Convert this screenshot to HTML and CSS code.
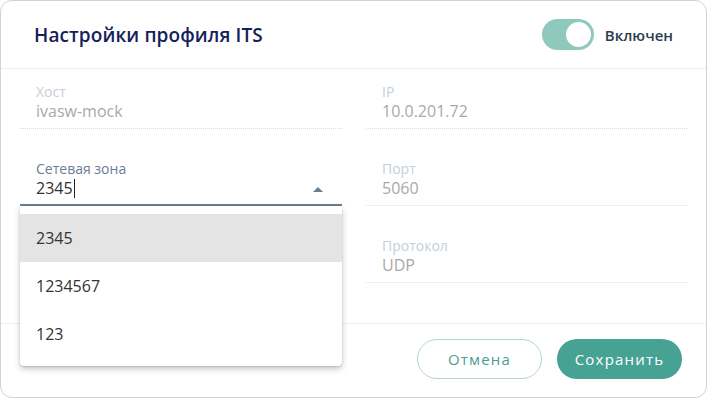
FILE: index.html
```html
<!DOCTYPE html>
<html lang="ru">
<head>
    <meta charset="UTF-8">
    <meta name="viewport" content="width=device-width, initial-scale=1.0">
    <title>Настройки профиля ITS</title>
    <link rel="stylesheet" href="styles.css">
</head>
<body>

    <div class="dialog">
        <div class="dialog-header">
            <h1>Настройки профиля ITS</h1>
            <label class="switch">
                <span class="switch-track"><span class="switch-thumb"></span></span>
                <span class="switch-text">Включен</span>
            </label>
        </div>

        <div class="dialog-body">
            <div class="field">
                <div class="field-label">Хост</div>
                <div class="field-value">ivasw-mock</div>
            </div>
            <div class="field">
                <div class="field-label">IP</div>
                <div class="field-value">10.0.201.72</div>
            </div>

            <div class="field select active">
                <div class="field-label">Сетевая зона</div>
                <div class="field-value">2345<span class="caret"></span></div>
                <span class="arrow"></span>
                <ul class="menu">
                    <li class="selected">2345</li>
                    <li>1234567</li>
                    <li>123</li>
                </ul>
            </div>
            <div class="field">
                <div class="field-label">Порт</div>
                <div class="field-value">5060</div>
            </div>

            <div></div>
            <div class="field">
                <div class="field-label">Протокол</div>
                <div class="field-value">UDP</div>
            </div>
        </div>

        <div class="dialog-footer">
            <button class="btn btn-outline">Отмена</button>
            <button class="btn btn-primary">Сохранить</button>
        </div>
    </div>

</body>
</html>
```

FILE: styles.css
```css
body {
    font-family: "Open Sans", "Noto Sans", sans-serif;
    background: #fff;
    margin: 0;
}
.dialog {
    width: 707px;
    height: 398px;
    box-sizing: border-box;
    border: 1px solid #d2d2d2;
    border-radius: 12px;
    display: flex;
    flex-direction: column;
    overflow: hidden;
}
.dialog-header {
    height: 68px;
    box-sizing: border-box;
    border-bottom: 1px solid #ededed;
    display: flex;
    align-items: center;
    justify-content: space-between;
    padding: 0 33px 0 33px;
}
.dialog-header h1 {
    margin: 0;
    font-size: 19px;
    font-weight: 600;
    color: #15215c;
    letter-spacing: 0.1px;
}
.switch {
    display: flex;
    align-items: center;
    gap: 11px;
}
.switch-track {
    width: 52px;
    height: 31px;
    border-radius: 16px;
    background: #8fc8bd;
    display: flex;
    align-items: center;
    justify-content: flex-end;
    padding: 0 3px;
    box-sizing: border-box;
}
.switch-thumb {
    width: 25px;
    height: 25px;
    border-radius: 50%;
    background: #fff;
}
.switch-text {
    font-size: 15px;
    font-weight: 600;
    color: #2c3c4e;
}
.dialog-body {
    flex: 1;
    display: grid;
    grid-template-columns: 322px 321px;
    column-gap: 24px;
    row-gap: 32px;
    align-content: start;
    padding: 15px 19px 0;
}
.field {
    position: relative;
    padding: 0 16px 6px;
    border-bottom: 1px dotted #d9dee3;
}
.field-label {
    font-size: 14px;
    line-height: 16px;
    color: #c6ced7;
}
.field-value {
    font-size: 16px;
    line-height: 22px;
    color: #a9a9a9;
}
.field.active {
    border-bottom: 2px solid #6b7d92;
    padding-bottom: 4px;
}
.field.active .field-label {
    color: #6b7d92;
}
.field.active .field-value {
    color: #333;
}
.caret {
    display: inline-block;
    width: 1px;
    height: 19px;
    background: #222;
    vertical-align: -4px;
    margin-left: 1px;
}
.arrow {
    position: absolute;
    right: 19px;
    top: 26px;
    width: 0;
    height: 0;
    border-left: 5px solid transparent;
    border-right: 5px solid transparent;
    border-bottom: 5px solid #6b7d92;
}
.menu {
    position: absolute;
    top: 100%;
    left: 0;
    right: 0;
    margin: 2px 0 0;
    padding: 8px 0;
    list-style: none;
    background: #fff;
    border-radius: 0 0 4px 4px;
    box-shadow: 0 3px 6px rgba(0, 0, 0, 0.22), 0 1px 2px rgba(0, 0, 0, 0.12);
    z-index: 2;
}
.menu li {
    height: 48px;
    line-height: 48px;
    padding: 0 16px;
    font-size: 16px;
    color: #333;
}
.menu li.selected {
    background: #e4e4e4;
}
.dialog-footer {
    height: 74px;
    box-sizing: border-box;
    border-top: 1px solid #efefef;
    display: flex;
    justify-content: flex-end;
    align-items: flex-start;
    gap: 15px;
    padding: 15px 24px 0;
}
.btn {
    width: 125px;
    height: 40px;
    border-radius: 20px;
    font-family: "Open Sans", sans-serif;
    font-size: 15px;
    font-weight: 500;
    letter-spacing: 1.2px;
    cursor: pointer;
}
.btn-outline {
    background: #fff;
    border: 1px solid #b7d5d1;
    color: #4a9e90;
}
.btn-primary {
    background: #46a293;
    border: none;
    color: #fff;
}
```
